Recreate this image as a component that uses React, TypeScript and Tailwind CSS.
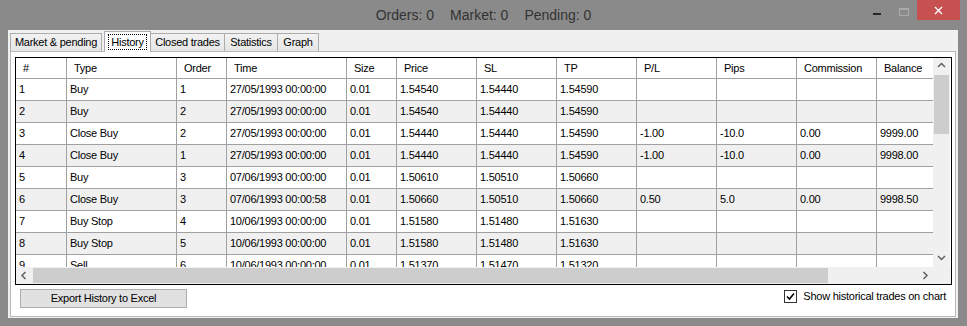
import React from 'react';

type Col = { label: string; w: string };

const cols: Col[] = [
  { label: '#', w: 'w-[51px]' },
  { label: 'Type', w: 'w-[110px]' },
  { label: 'Order', w: 'w-[50px]' },
  { label: 'Time', w: 'w-[120px]' },
  { label: 'Size', w: 'w-[50px]' },
  { label: 'Price', w: 'w-[80px]' },
  { label: 'SL', w: 'w-[80px]' },
  { label: 'TP', w: 'w-[80px]' },
  { label: 'P/L', w: 'w-[80px]' },
  { label: 'Pips', w: 'w-[80px]' },
  { label: 'Commission', w: 'w-[80px]' },
  { label: 'Balance', w: 'w-[80px]' },
];

const rows: string[][] = [
  ['1', 'Buy', '1', '27/05/1993 00:00:00', '0.01', '1.54540', '1.54440', '1.54590', '', '', '', ''],
  ['2', 'Buy', '2', '27/05/1993 00:00:00', '0.01', '1.54540', '1.54440', '1.54590', '', '', '', ''],
  ['3', 'Close Buy', '2', '27/05/1993 00:00:00', '0.01', '1.54440', '1.54440', '1.54590', '-1.00', '-10.0', '0.00', '9999.00'],
  ['4', 'Close Buy', '1', '27/05/1993 00:00:00', '0.01', '1.54440', '1.54440', '1.54590', '-1.00', '-10.0', '0.00', '9998.00'],
  ['5', 'Buy', '3', '07/06/1993 00:00:00', '0.01', '1.50610', '1.50510', '1.50660', '', '', '', ''],
  ['6', 'Close Buy', '3', '07/06/1993 00:00:58', '0.01', '1.50660', '1.50510', '1.50660', '0.50', '5.0', '0.00', '9998.50'],
  ['7', 'Buy Stop', '4', '10/06/1993 00:00:00', '0.01', '1.51580', '1.51480', '1.51630', '', '', '', ''],
  ['8', 'Buy Stop', '5', '10/06/1993 00:00:00', '0.01', '1.51580', '1.51480', '1.51630', '', '', '', ''],
  ['9', 'Sell', '6', '10/06/1993 00:00:00', '0.01', '1.51370', '1.51470', '1.51320', '', '', '', ''],
];

const Chevron = ({ dir }: { dir: 'up' | 'down' | 'left' | 'right' }) => {
  const pts = {
    up: '1,5 4.5,1.5 8,5',
    down: '1,2 4.5,5.5 8,2',
    left: '5.5,1 2,4.5 5.5,8',
    right: '2.5,1 6,4.5 2.5,8',
  }[dir];
  return (
    <svg width="9" height="9" viewBox="0 0 9 9">
      <polyline points={pts} fill="none" stroke="#606060" strokeWidth="1.5" />
    </svg>
  );
};

const App: React.FC = () => {
  return (
    <div className="flex h-[326px] w-[967px] flex-col overflow-hidden bg-[#8a8a8a] font-['Liberation_Sans',Arial,sans-serif] text-[11px] tracking-[-0.25px] text-black">
      {/* title bar */}
      <div className="grid h-[30px] shrink-0 grid-cols-[1fr_auto_1fr]">
        <div />
        <div className="flex items-center gap-[16px] text-[14px] tracking-normal text-[#333333]">
          <span>Orders: 0</span>
          <span>Market: 0</span>
          <span>Pending: 0</span>
        </div>
        <div className="flex items-start justify-end pr-[7px]">
          <div className="flex h-[20px] w-[26px] justify-center pt-[13px]">
            <div className="h-[2px] w-[8px] bg-[#262626]" />
          </div>
          <div className="flex h-[20px] w-[27px] justify-center pt-[8px]">
            <div className="h-[8px] w-[10px] border border-t-2 border-[#ababab]" />
          </div>
          <div className="flex h-[20px] w-[43px] items-center justify-center bg-[#c75050]">
            <svg width="9" height="9" viewBox="0 0 9 9">
              <path d="M1 1 L8 8 M8 1 L1 8" stroke="#ffffff" strokeWidth="1.4" />
            </svg>
          </div>
        </div>
      </div>

      {/* client */}
      <div className="ml-[8px] mr-[9px] mb-[8px] flex flex-1 flex-col bg-[#f0f0f0]">
        {/* tabs */}
        <div className="flex h-[21px] shrink-0 items-end pl-[2px]">
          <div className="flex h-[18px] w-[92px] items-center justify-center border border-b-0 border-[#acacac] bg-linear-to-b from-[#f2f2f2] to-[#e6e6e6]">
            Market &amp; pending
          </div>
          <div className="relative z-10 ml-[2px] mb-[-1px] flex h-[21px] w-[47px] items-center justify-center border border-b-0 border-[#acacac] bg-white pb-px">
            <span className="border border-dotted border-black px-[2px] leading-[14px]">History</span>
          </div>
          <div className="flex h-[18px] w-[74px] items-center justify-center border border-l-0 border-b-0 border-[#acacac] bg-linear-to-b from-[#f2f2f2] to-[#e6e6e6]">
            Closed trades
          </div>
          <div className="flex h-[18px] w-[53px] items-center justify-center border border-l-0 border-b-0 border-[#acacac] bg-linear-to-b from-[#f2f2f2] to-[#e6e6e6]">
            Statistics
          </div>
          <div className="flex h-[18px] w-[41px] items-center justify-center border border-l-0 border-b-0 border-[#acacac] bg-linear-to-b from-[#f2f2f2] to-[#e6e6e6]">
            Graph
          </div>
        </div>

        {/* tab page */}
        <div className="mx-[2px] mb-[1px] flex flex-1 flex-col border border-[#b9b9b9] bg-white pt-[5px] pl-[4px] pr-[3px]">
          {/* grid */}
          <div className="flex h-[228px] flex-col border border-black">
            <div className="flex min-h-0 flex-1">
              <div className="w-[917px] overflow-hidden">
                <div className="flex h-[21px] w-max border-b border-[#a0a0a0] bg-white">
                  {cols.map((c) => (
                    <div
                      key={c.label}
                      className={`${c.w} flex shrink-0 items-center overflow-hidden whitespace-nowrap border-r border-[#a0a0a0] pl-[7px]`}
                    >
                      {c.label}
                    </div>
                  ))}
                </div>
                {rows.map((r, i) => (
                  <div
                    key={i}
                    className={`flex h-[22px] w-max border-b border-[#a0a0a0] ${i % 2 === 1 ? 'bg-[#f0f0f0]' : 'bg-white'}`}
                  >
                    {r.map((v, j) => (
                      <div
                        key={j}
                        className={`${cols[j].w} flex shrink-0 items-center overflow-hidden whitespace-nowrap border-r border-[#a0a0a0] pl-[3px]`}
                      >
                        {v}
                      </div>
                    ))}
                  </div>
                ))}
              </div>
              {/* vertical scrollbar */}
              <div className="flex w-[17px] shrink-0 flex-col bg-[#f0f0f0]">
                <div className="flex h-[17px] items-center justify-center">
                  <Chevron dir="up" />
                </div>
                <div className="flex justify-center">
                  <div className="h-[59px] w-[15px] bg-[#cdcdcd]" />
                </div>
                <div className="flex-1" />
                <div className="flex h-[17px] items-center justify-center">
                  <Chevron dir="down" />
                </div>
              </div>
            </div>
            {/* horizontal scrollbar */}
            <div className="flex h-[17px] shrink-0 bg-[#f0f0f0]">
              <div className="flex h-full w-[17px] items-center justify-center">
                <Chevron dir="left" />
              </div>
              <div className="flex items-center">
                <div className="h-[15px] w-[795px] bg-[#cdcdcd]" />
              </div>
              <div className="flex-1" />
              <div className="flex h-full w-[17px] items-center justify-center">
                <Chevron dir="right" />
              </div>
              <div className="w-[17px]" />
            </div>
          </div>

          {/* bottom row */}
          <div className="mt-[4px] flex items-start justify-between pl-[5px] pr-[6px]">
            <button className="flex h-[19px] w-[167px] items-center justify-center border border-[#adadad] bg-[#e1e1e1]">
              Export History to Excel
            </button>
            <label className="mt-[-1px] flex items-center gap-[6px]">
              <span className="flex h-[13px] w-[13px] items-center justify-center border border-[#333333] bg-white">
                <svg width="9" height="9" viewBox="0 0 9 9">
                  <path d="M1 4.5 L3.5 7 L8 1.5" fill="none" stroke="#000000" strokeWidth="1.6" />
                </svg>
              </span>
              <span>Show historical trades on chart</span>
            </label>
          </div>
        </div>
      </div>
    </div>
  );
};

export default App;
